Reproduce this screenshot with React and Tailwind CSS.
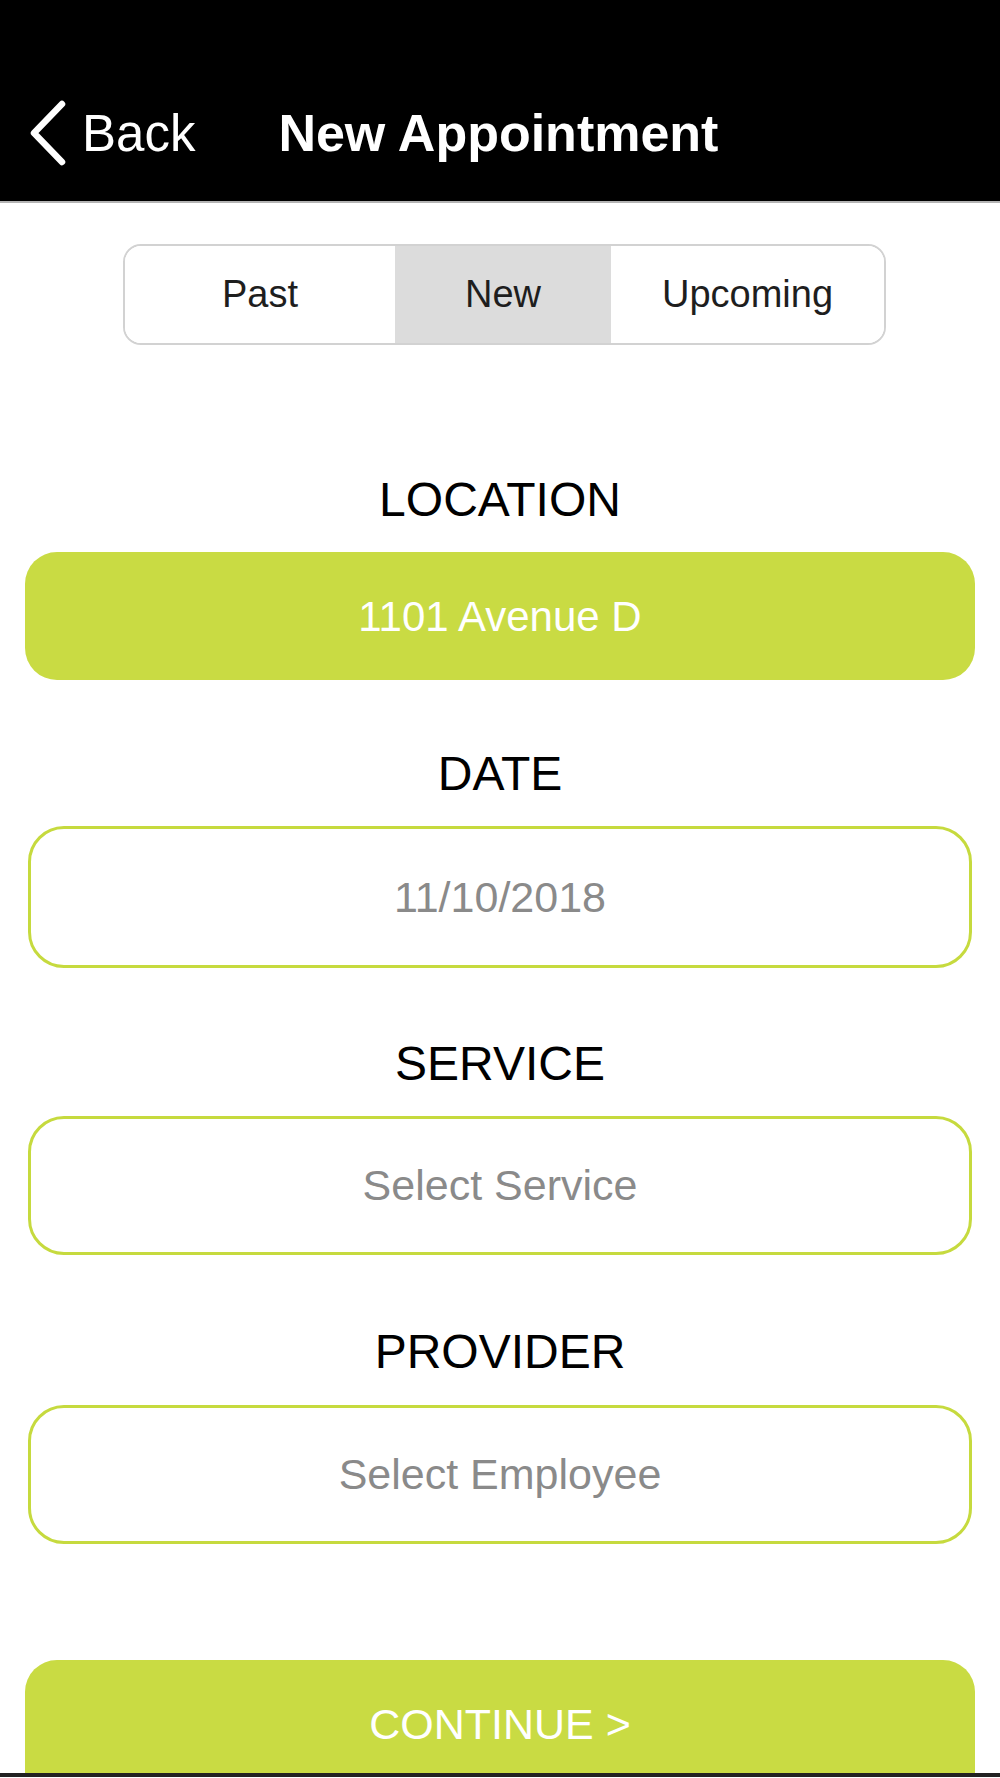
import React from "react";

const green = "bg-[#c9db43]";

function Label({ children, className }) {
  return (
    <div className={"h-[56px] flex items-center justify-center text-[48px] text-black leading-none " + className}>
      {children}
    </div>
  );
}

function Field({ children, className }) {
  return (
    <div
      className={
        "mx-[28px] border-[3px] border-[#c6da3e] rounded-[36px] flex items-center justify-center text-[43px] text-[#8a8a8a] " +
        className
      }
    >
      {children}
    </div>
  );
}

export default function App() {
  const segments = [
    { label: "Past", w: "w-[270px]", active: false },
    { label: "New", w: "w-[216px]", active: true },
    { label: "Upcoming", w: "flex-1", active: false },
  ];

  return (
    <div
      className="w-[1000px] h-[1778px] bg-white flex flex-col overflow-hidden"
      style={{ fontFamily: '"Liberation Sans", Arial, sans-serif' }}
    >
      {/* header */}
      <div className="h-[203px] bg-black border-b-2 border-[#b4b4b4] flex items-center pt-[65px] shrink-0">
        <div className="flex items-center ml-[26px] text-white">
          <svg width="44" height="66" viewBox="0 0 44 66" fill="none">
            <polyline
              points="36,4 8,33 36,62"
              stroke="white"
              strokeWidth="6.5"
              strokeLinecap="round"
              strokeLinejoin="round"
            />
          </svg>
          <span className="ml-[12px] text-[51px] leading-none">Back</span>
        </div>
        <span className="ml-[83px] text-[52px] font-bold text-white leading-none">New Appointment</span>
      </div>

      {/* segmented control */}
      <div className="mt-[41px] ml-[123px] w-[763px] h-[101px] border-2 border-[#d2d2d2] rounded-[18px] flex overflow-hidden shrink-0">
        {segments.map((s) => (
          <div
            key={s.label}
            className={
              s.w +
              " flex items-center justify-center text-[38px] text-[#1e1e1e] " +
              (s.active ? "bg-[#dcdcdc]" : "bg-white")
            }
          >
            {s.label}
          </div>
        ))}
      </div>

      <Label className="mt-[127px]">LOCATION</Label>
      <div
        className={
          "mt-[24px] mx-[25px] h-[128px] rounded-[32px] flex items-center justify-center text-[42px] text-white shrink-0 " +
          green
        }
      >
        1101 Avenue D
      </div>

      <Label className="mt-[66px]">DATE</Label>
      <Field className="mt-[24px] h-[142px] shrink-0">11/10/2018</Field>

      <Label className="mt-[68px]">SERVICE</Label>
      <Field className="mt-[24px] h-[139px] shrink-0">Select Service</Field>

      <Label className="mt-[69px]">PROVIDER</Label>
      <Field className="mt-[25px] h-[139px] shrink-0">Select Employee</Field>

      <div
        className={
          "mt-[116px] mx-[25px] h-[113px] rounded-t-[32px] flex items-center justify-center pt-[15px] text-[43px] text-white shrink-0 " +
          green
        }
      >
        CONTINUE &gt;
      </div>
      <div className="h-[4px] bg-[#222] shrink-0" />
    </div>
  );
}
